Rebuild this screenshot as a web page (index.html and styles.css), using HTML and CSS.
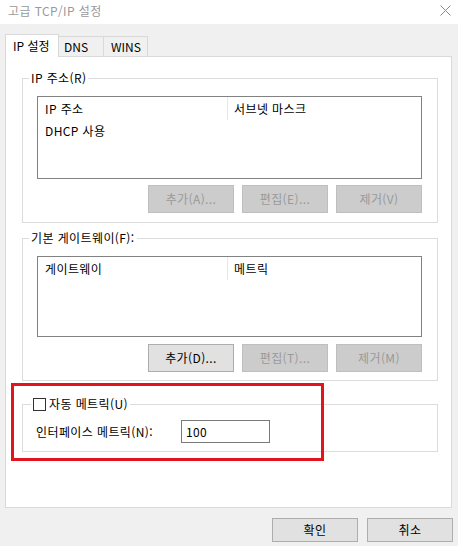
FILE: index.html
```html
<!DOCTYPE html>
<html lang="ko">
<head>
<meta charset="utf-8">
<title>고급 TCP/IP 설정</title>
<link rel="stylesheet" href="styles.css">
</head>
<body>
<div class="window">
  <div class="titlebar">
    <span class="title">고급 TCP/IP 설정</span>
    <svg class="close" width="11" height="11" viewBox="0 0 11 11"><path d="M0.5 0.5 L10.5 10.5 M10.5 0.5 L0.5 10.5" stroke="#8a8a8a" stroke-width="1" fill="none"/></svg>
  </div>
  <div class="client">
    <div class="tabs">
      <div class="tab active">IP 설정</div>
      <div class="tab">DNS</div>
      <div class="tab">WINS</div>
    </div>
    <div class="panel">
      <fieldset class="group g-ip">
        <legend>IP 주소(R)</legend>
        <div class="gbody">
          <div class="listbox lb-ip">
            <div class="lv-head">
              <div class="col c1">IP 주소</div>
              <div class="col c2">서브넷 마스크</div>
            </div>
            <div class="lv-row">DHCP 사용</div>
          </div>
          <div class="btn-row">
            <button class="btn disabled">추가(A)...</button>
            <button class="btn disabled">편집(E)...</button>
            <button class="btn disabled">제거(V)</button>
          </div>
        </div>
      </fieldset>
      <fieldset class="group g-gw">
        <legend>기본 게이트웨이(F):</legend>
        <div class="gbody">
          <div class="listbox lb-gw">
            <div class="lv-head">
              <div class="col c1">게이트웨이</div>
              <div class="col c2">메트릭</div>
            </div>
          </div>
          <div class="btn-row">
            <button class="btn">추가(D)...</button>
            <button class="btn disabled">편집(T)...</button>
            <button class="btn disabled">제거(M)</button>
          </div>
        </div>
      </fieldset>
      <fieldset class="group g-metric">
        <legend class="chk-legend"><span class="checkbox"></span><span class="chk-label">자동 메트릭(U)</span></legend>
        <div class="gbody metric-body">
          <span class="metric-label">인터페이스 메트릭(N):</span>
          <div class="textbox">100</div>
        </div>
      </fieldset>
    </div>
    <div class="footer">
      <button class="btn ok">확인</button>
      <button class="btn cancel">취소</button>
    </div>
  </div>
  <div class="highlight"></div>
</div>
</body>
</html>
```
FILE: styles.css
```css
* { box-sizing: border-box; }
html, body { margin: 0; padding: 0; }
body {
  width: 458px;
  height: 546px;
  background: #f0f0f0;
  font-family: "Noto Sans CJK KR", "Noto Sans", sans-serif;
  font-size: 12px;
  letter-spacing: 0.4px;
  color: #000;
  overflow: hidden;
}
.window {
  position: relative;
  width: 458px;
  height: 546px;
}
.titlebar {
  height: 24px;
  background: #fff;
  display: flex;
  align-items: center;
  justify-content: space-between;
  padding: 0 7px 0 8px;
}
.title {
  color: #999;
  font-size: 12px;
  line-height: 16px;
  margin-top: -2px;
}
.close { margin-top: -3px; }
.client {
  padding: 0 0 0 5px;
}
.tabs {
  display: flex;
  align-items: flex-end;
  height: 22px;
  margin-top: 10px;
  position: relative;
  z-index: 2;
  letter-spacing: 0;
}
.tab {
  height: 20px;
  border: 1px solid #d9d9d9;
  border-bottom: none;
  background: #f0f0f0;
  padding: 0 5px;
  line-height: 19px;
  margin-left: -1px;
}
.tab.active {
  height: 23px;
  margin-left: 0;
  margin-bottom: -1px;
  background: #fff;
  padding: 0 7px 0 7px;
  line-height: 21px;
  width: 54px;
}
.tabs .tab:nth-child(2) { width: 46px; }
.tabs .tab:nth-child(3) { width: 45px; padding-left: 7px; }
.panel {
  width: 447px;
  height: 452px;
  background: #fff;
  border: 1px solid #d9d9d9;
  display: flex;
  flex-direction: column;
  align-items: flex-start;
}
.group {
  margin: 0 0 0 16px;
  padding: 0;
  width: 416px;
  min-width: 0;
  border: 1px solid #dcdcdc;
}
.group legend {
  padding: 0 2px;
  margin-left: 6px;
  line-height: 16px;
  height: 16px;
}
.g-ip { margin-top: 13px; }
.g-gw { margin-top: 7px; }
.g-metric { margin-top: 15px; }
.gbody {
  padding: 10px 15px 9px 14px;
}
.g-gw .gbody { padding-bottom: 8px; }
.listbox {
  width: 385px;
  border: 1px solid #828282;
  background: #fff;
}
.lb-ip { height: 83px; }
.lb-gw { height: 81px; }
.lv-head {
  display: flex;
  height: 23px;
}
.col {
  line-height: 24px;
  padding-left: 7px;
}
.c1 {
  width: 190px;
  border-right: 1px solid #e8e8e8;
}
.c2 { flex: 1; padding-left: 6px; }
.lv-row {
  padding-left: 7px;
  line-height: 20px;
  margin-top: 1px;
}
.btn-row {
  display: flex;
  justify-content: flex-end;
  gap: 8px;
  margin-top: 6px;
}
.g-gw .btn-row { margin-top: 7px; }
.btn {
  font-family: inherit;
  font-size: 12px;
  letter-spacing: inherit;
  width: 86px;
  height: 28px;
  padding: 0;
  margin: 0;
  background: #e1e1e1;
  border: 1px solid #adadad;
  color: #000;
  line-height: 16px;
}
.btn.disabled {
  background: #cccccc;
  border-color: #bfbfbf;
  color: #9a9a9a;
}
.chk-legend {
  display: flex;
  align-items: center;
  margin-left: 8px !important;
}
.checkbox {
  width: 13px;
  height: 13px;
  border: 1px solid #333;
  background: #fff;
  display: inline-block;
}
.chk-label { margin-left: 3px; }
.metric-body {
  display: flex;
  align-items: center;
  padding: 8px 15px 8px 13px;
}
.metric-label {
  width: 145px;
}
.textbox {
  width: 89px;
  height: 23px;
  border: 1px solid #7a7a7a;
  line-height: 21px;
  padding-left: 4px;
}
.footer {
  display: flex;
  justify-content: flex-end;
  gap: 9px;
  padding-right: 5px;
  margin-top: 10px;
}
.footer .btn {
  width: 86px;
  height: 24px;
}
.highlight {
  position: absolute;
  left: 11px;
  top: 383px;
  width: 313px;
  height: 78px;
  border: 3px solid #e3141c;
  pointer-events: none;
}
```
